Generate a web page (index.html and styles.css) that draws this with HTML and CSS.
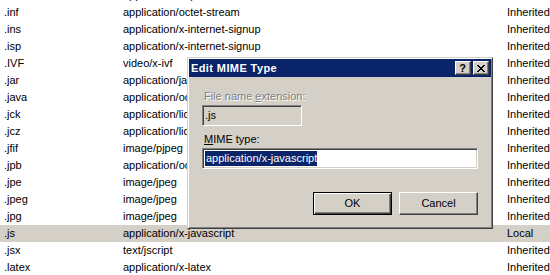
FILE: index.html
```html
<!DOCTYPE html>
<html>
<head>
<meta charset="utf-8">
<link rel="stylesheet" href="styles.css">
</head>
<body>
<div class="list">
  <div class="row"><span>.iii</span><span>application/x-iphone</span><span>Inherited</span></div>
  <div class="row"><span>.inf</span><span>application/octet-stream</span><span>Inherited</span></div>
  <div class="row"><span>.ins</span><span>application/x-internet-signup</span><span>Inherited</span></div>
  <div class="row"><span>.isp</span><span>application/x-internet-signup</span><span>Inherited</span></div>
  <div class="row"><span>.IVF</span><span>video/x-ivf</span><span>Inherited</span></div>
  <div class="row"><span>.jar</span><span>application/java-archive</span><span>Inherited</span></div>
  <div class="row"><span>.java</span><span>application/octet-stream</span><span>Inherited</span></div>
  <div class="row"><span>.jck</span><span>application/liquidmotion</span><span>Inherited</span></div>
  <div class="row"><span>.jcz</span><span>application/liquidmotion</span><span>Inherited</span></div>
  <div class="row"><span>.jfif</span><span>image/pjpeg</span><span>Inherited</span></div>
  <div class="row"><span>.jpb</span><span>application/octet-stream</span><span>Inherited</span></div>
  <div class="row"><span>.jpe</span><span>image/jpeg</span><span>Inherited</span></div>
  <div class="row"><span>.jpeg</span><span>image/jpeg</span><span>Inherited</span></div>
  <div class="row"><span>.jpg</span><span>image/jpeg</span><span>Inherited</span></div>
  <div class="row selected"><span>.js</span><span>application/x-javascript</span><span>Local</span></div>
  <div class="row"><span>.jsx</span><span>text/jscript</span><span>Inherited</span></div>
  <div class="row"><span>.latex</span><span>application/x-latex</span><span>Inherited</span></div>
</div>

<div class="dialog">
  <div class="titlebar">
    <span class="title">Edit MIME Type</span>
    <div class="tbuttons">
      <div class="tbtn help">?</div>
      <div class="tbtn close">
        <svg width="8" height="7" viewBox="0 0 8 7"><path d="M0 0h2v1h1v1h2v-1h1v-1h2v1h-1v1h-1v1h-1v1h1v1h1v1h1v1h-2v-1h-1v-1h-2v1h-1v1h-2v-1h1v-1h1v-1h1v-1h-1v-1h-1v-1h-1z" fill="#000"/></svg>
      </div>
    </div>
  </div>
  <div class="body">
    <div class="label disabled">File name <u>e</u>xtension:</div>
    <div class="field readonly">.js</div>
    <div class="label second"><u>M</u>IME type:</div>
    <div class="field edit"><span class="sel">application/x-javascript</span></div>
    <div class="actions">
      <div class="btn default">OK</div>
      <div class="btn">Cancel</div>
    </div>
  </div>
</div>
</body>
</html>
```

FILE: styles.css
```css
html, body {
  margin: 0;
  padding: 0;
  background: #ffffff;
  overflow: hidden;
}

body {
  width: 550px;
  height: 275px;
  font-family: "Liberation Sans", Arial, sans-serif;
  font-size: 11px;
  color: #000;
}

.list {
  margin-top: -13px;
}

.row {
  display: grid;
  grid-template-columns: 119px 384px 1fr;
  padding-left: 4px;
  height: 17px;
  line-height: 17px;
  white-space: nowrap;
  overflow: hidden;
}

.row.selected {
  background: #d4d0c8;
}

.dialog {
  position: absolute;
  left: 187px;
  top: 57px;
  width: 306px;
  height: 172px;
  box-sizing: border-box;
  background: #d4d0c8;
  border: 1px solid;
  border-color: #d4d0c8 #404040 #404040 #d4d0c8;
  box-shadow: inset 1px 1px 0 #ffffff, inset -1px -1px 0 #808080;
  padding: 1px;
}

.titlebar {
  height: 18px;
  background: #0a246a;
  display: flex;
  align-items: center;
  padding: 0 2px 0 2px;
}

.title {
  color: #ffffff;
  font-weight: bold;
  letter-spacing: 0.4px;
  line-height: 18px;
}

.tbuttons {
  margin-left: auto;
  display: flex;
  gap: 2px;
}

.tbtn {
  width: 16px;
  height: 14px;
  box-sizing: border-box;
  background: #d4d0c8;
  border: 1px solid;
  border-color: #ffffff #404040 #404040 #ffffff;
  box-shadow: inset -1px -1px 0 #808080;
  display: flex;
  align-items: center;
  justify-content: center;
}

.help {
  font-weight: bold;
  font-size: 11px;
  line-height: 12px;
  padding-right: 1px;
}

.close svg {
  display: block;
  margin-right: 1px;
}

.body {
  padding: 13px 13px 0 13px;
}

.label {
  line-height: 13px;
  height: 13px;
  padding-left: 2px;
}

.label.disabled {
  color: #808080;
  text-shadow: 1px 1px 0 #ffffff;
}

.label.second {
  margin-top: 7px;
}

.field {
  margin-top: 2px;
  height: 21px;
  box-sizing: border-box;
  border: 1px solid;
  border-color: #808080 #ffffff #ffffff #808080;
  box-shadow: inset 1px 1px 0 #404040, inset -1px -1px 0 #d4d0c8;
  padding: 1px 2px 0 2px;
  line-height: 17px;
  white-space: nowrap;
}

.field.readonly {
  width: 100px;
  background: #d4d0c8;
}

.field.edit {
  background: #ffffff;
}

.sel {
  background: #0a246a;
  color: #ffffff;
  display: inline-block;
  line-height: 15px;
  padding-left: 1px;
}

.actions {
  margin-top: 23px;
  display: flex;
  justify-content: flex-end;
  gap: 7px;
}

.btn {
  width: 79px;
  height: 23px;
  box-sizing: border-box;
  border: 1px solid;
  border-color: #ffffff #404040 #404040 #ffffff;
  box-shadow: inset -1px -1px 0 #808080;
  display: flex;
  align-items: center;
  justify-content: center;
  line-height: 13px;
}

.btn.default {
  border-color: #000000;
  box-shadow: inset 1px 1px 0 #ffffff, inset -1px -1px 0 #404040, inset -2px -2px 0 #808080;
}
```
